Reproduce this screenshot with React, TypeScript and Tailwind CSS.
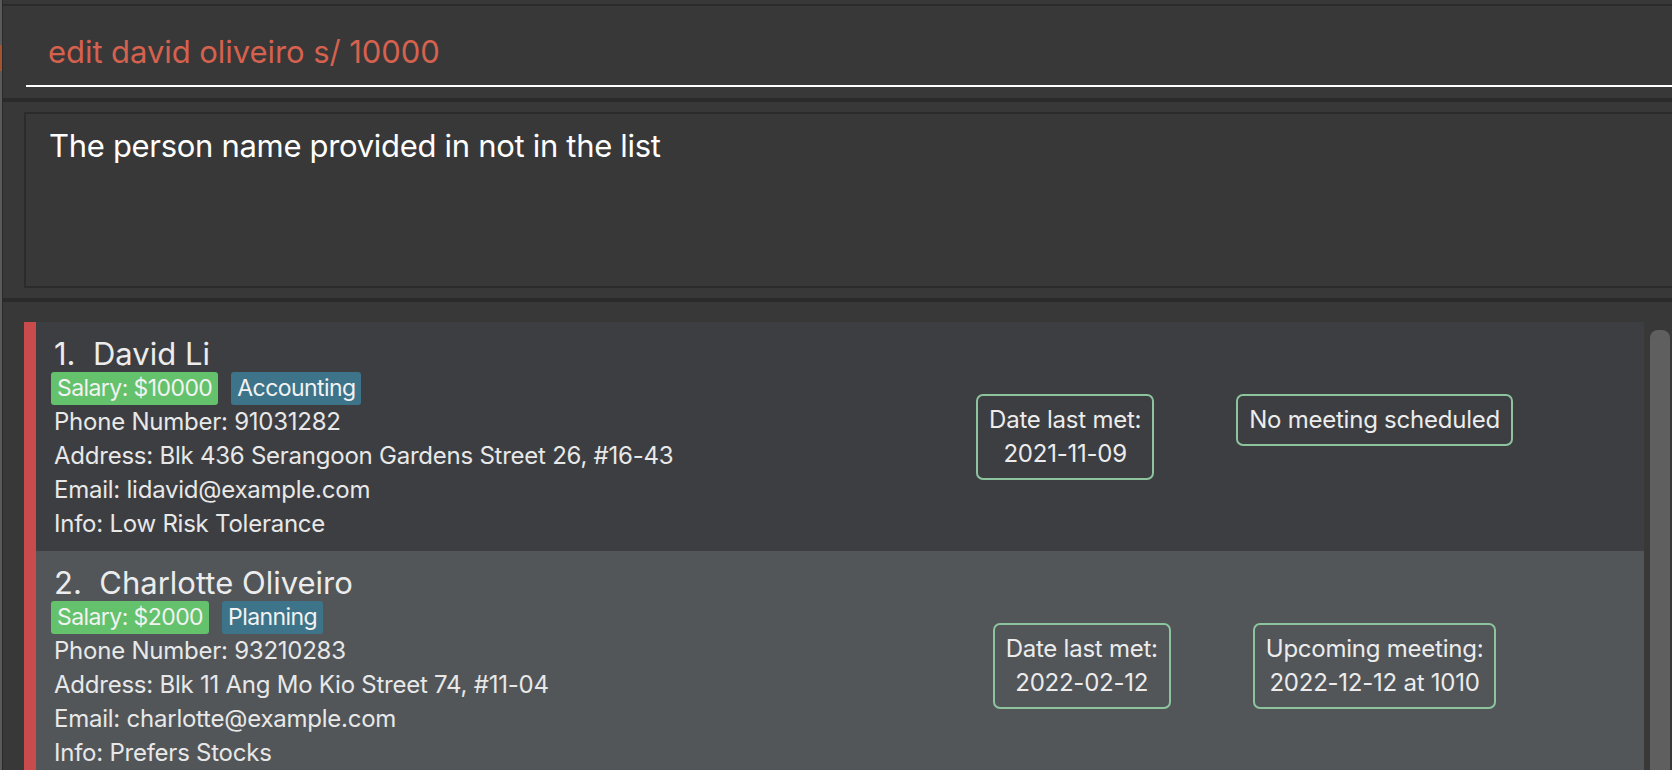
type Person = {
  name: string;
  salary: string;
  tag: string;
  phone: string;
  address: string;
  email: string;
  info: string;
  lastMet: string;
  meeting: string[];
  bg: string;
};

const people: Person[] = [
  {
    name: "1.  David Li",
    salary: "Salary: $10000",
    tag: "Accounting",
    phone: "91031282",
    address: "Blk 436 Serangoon Gardens Street 26, #16-43",
    email: "lidavid@example.com",
    info: "Low Risk Tolerance",
    lastMet: "2021-11-09",
    meeting: ["No meeting scheduled"],
    bg: "bg-[#3d3e41]",
  },
  {
    name: "2.  Charlotte Oliveiro",
    salary: "Salary: $2000",
    tag: "Planning",
    phone: "93210283",
    address: "Blk 11 Ang Mo Kio Street 74, #11-04",
    email: "charlotte@example.com",
    info: "Prefers Stocks",
    lastMet: "2022-02-12",
    meeting: ["Upcoming meeting:", "2022-12-12 at 1010"],
    bg: "bg-[#525659]",
  },
];

function InfoBox({ lines }: { lines: string[] }) {
  return (
    <div className="rounded-[7px] border-2 border-[#8dc49e] px-[11px] py-[7px] text-center text-[24px] leading-[34px] tracking-[-0.01em] text-[#ececec]">
      {lines.map((l) => (
        <div key={l} className="whitespace-nowrap">
          {l}
        </div>
      ))}
    </div>
  );
}

function PersonCard({ p }: { p: Person }) {
  return (
    <div className={`flex border-l-[12px] border-[#c94b4b] ${p.bg}`}>
      <div className="w-[809px] shrink-0 pb-[10px] pl-[15px] pt-[15px]">
        <div className="whitespace-pre pl-[3px] text-[31px] leading-[34px] text-[#ececec]">
          {p.name}
        </div>
        <div className="mt-[1px] flex h-[33px] gap-[13px]">
          <span className="flex items-center rounded-[3px] bg-[#63c26b] px-[6px] text-[23px] tracking-[-0.025em] text-[#f2f2f2]">
            {p.salary}
          </span>
          <span className="flex items-center rounded-[3px] bg-[#3e7489] px-[6px] text-[23px] tracking-[-0.025em] text-[#f2f2f2]">
            {p.tag}
          </span>
        </div>
        <div className="pl-[3px] text-[24px] leading-[34px] tracking-[-0.01em] text-[#e8e8e8]">
          <div>Phone Number: {p.phone}</div>
          <div>Address: {p.address}</div>
          <div>Email: {p.email}</div>
          <div>Info: {p.info}</div>
        </div>
      </div>
      <div className="flex flex-1 items-start justify-center gap-[82px] pt-[72px]">
        <InfoBox lines={["Date last met:", p.lastMet]} />
        <InfoBox lines={p.meeting} />
      </div>
    </div>
  );
}

export default function App() {
  return (
    <div className="flex h-[770px] w-full overflow-hidden bg-[#383838] font-[Inter,sans-serif]">
      <div className="flex w-[2px] flex-col bg-[#5a5a5a]">
        <div className="mt-[45px] h-[26px] w-[2px] bg-[#a4532f]" />
      </div>
      <div className="w-px bg-[#2a2a2a]" />

      <div className="flex min-w-0 flex-1 flex-col">
        <div className="h-[4px]" />
        <div className="h-[2px] bg-[#2b2b2b]" />

        {/* command box */}
        <div className="h-[92px] pt-[26px]">
          <div className="h-[40px] pl-[45px] text-[31px] leading-[40px] tracking-[-0.002em] text-[#d5614e]">
            edit david oliveiro s/ 10000
          </div>
          <div className="ml-[23px] mt-[13px] h-[2px] bg-white" />
        </div>
        <div className="h-[4px] bg-[#2a2a2a]" />

        {/* result display */}
        <div className="pl-[21px] pt-[10px]">
          <div className="h-[176px] border-2 border-r-0 border-[#2b2b2b] pl-[23px] pt-[12px] text-[31px] leading-[40px] tracking-[-0.01em] text-white">
            The person name provided in not in the list
          </div>
        </div>
        <div className="mt-[10px] h-[4px] bg-[#2a2a2a]" />

        {/* person list */}
        <div className="flex min-h-0 flex-1 pl-[21px] pt-[20px]">
          <div className="flex-1 overflow-hidden">
            {people.map((p) => (
              <PersonCard key={p.name} p={p} />
            ))}
          </div>
          <div className="flex w-[28px] shrink-0 pl-[6px] pr-[2px] pt-[8px]">
            <div className="h-full w-[20px] rounded-t-[8px] bg-[#5f5f5f]" />
          </div>
        </div>
      </div>
    </div>
  );
}
